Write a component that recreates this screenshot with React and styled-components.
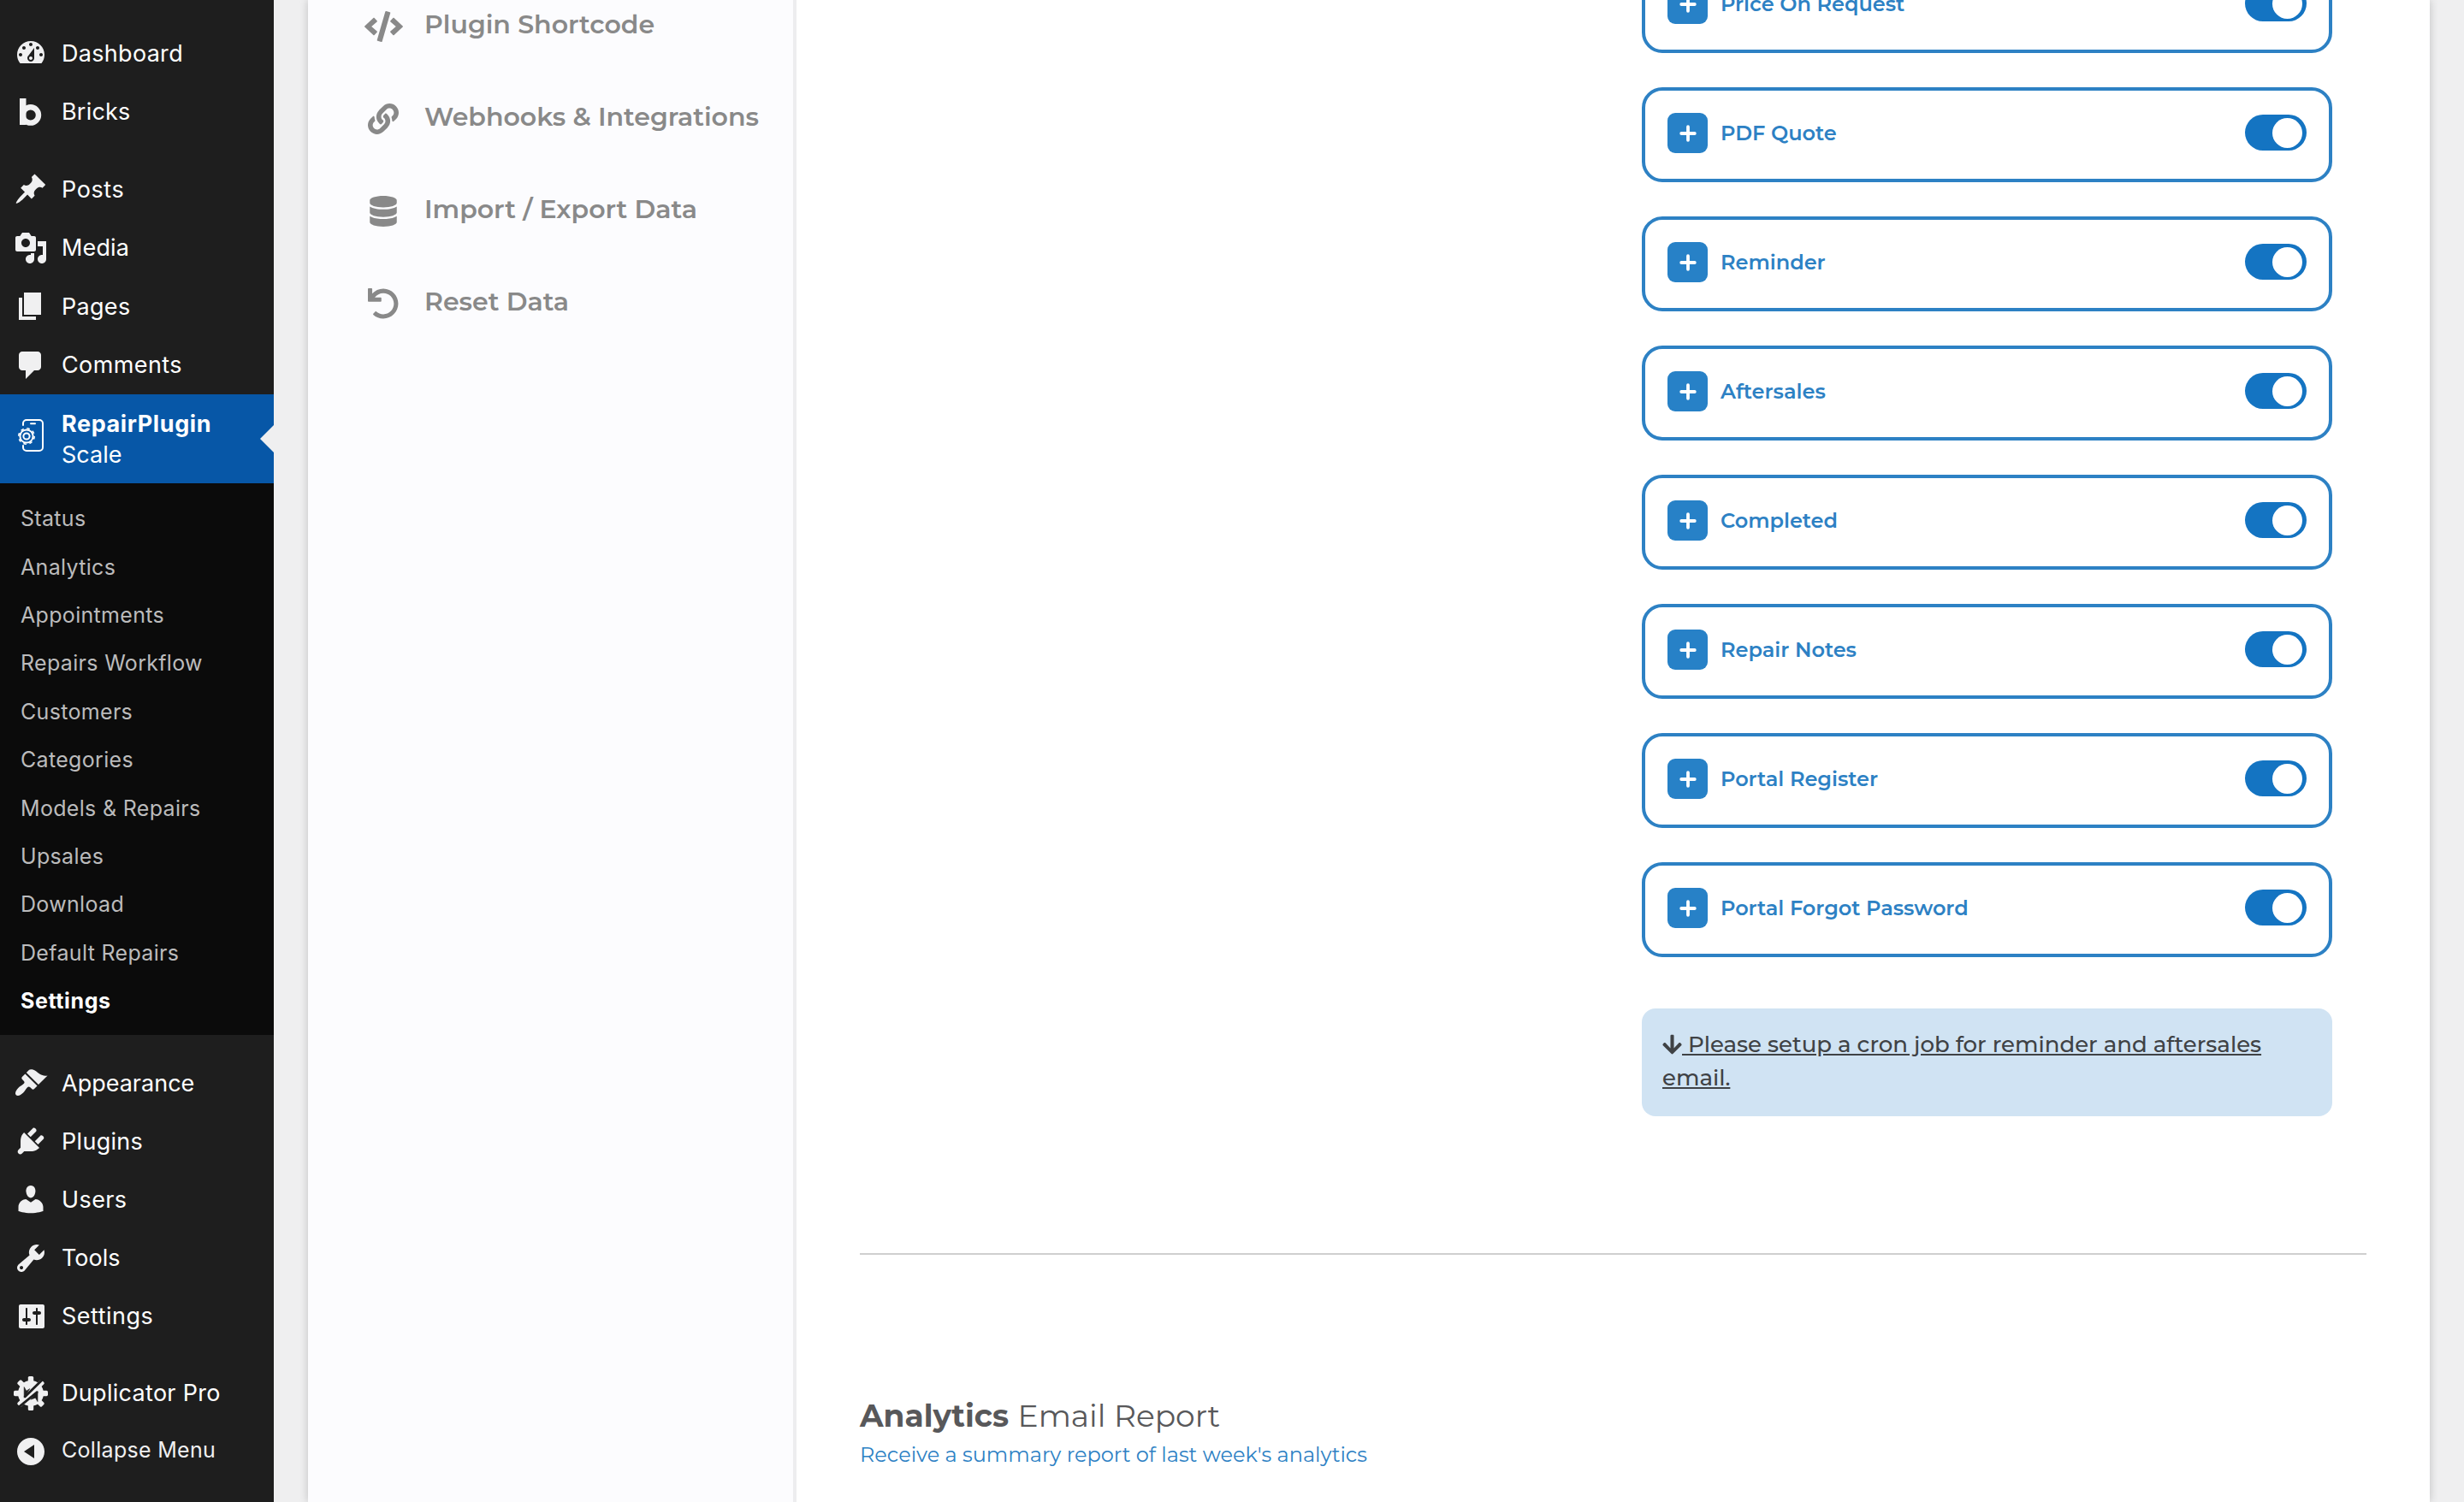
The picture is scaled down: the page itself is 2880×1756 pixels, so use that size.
import React from "react";
import styled, { createGlobalStyle } from "styled-components";
import { FaArrowDown, FaCode, FaDatabase, FaLink, FaUndo } from "react-icons/fa";

const mainMenu = [
  { label: "Dashboard", icon: "dashboard" },
  { label: "Bricks", icon: "bricks", track: 0.2 },
];

const contentMenu = [
  { label: "Posts", icon: "post", track: 0.6 },
  { label: "Media", icon: "media", track: 0.15 },
  { label: "Pages", icon: "page" },
  { label: "Comments", icon: "comments", track: 0.4 },
];

const subMenu = [
  "Status",
  "Analytics",
  "Appointments",
  "Repairs Workflow",
  "Customers",
  "Categories",
  "Models & Repairs",
  "Upsales",
  "Download",
  "Default Repairs",
  "Settings",
];

const adminMenu = [
  { label: "Appearance", icon: "appearance", track: 0 },
  { label: "Plugins", icon: "plugins" },
  { label: "Users", icon: "users", track: 0.4 },
  { label: "Tools", icon: "tools", track: 0.02 },
  { label: "Settings", icon: "settings", track: 0.5 },
];

const settingsNav = [
  { label: "Plugin Shortcode", Icon: FaCode, iconWidth: 45 },
  { label: "Webhooks & Integrations", Icon: FaLink },
  { label: "Import / Export Data", Icon: FaDatabase },
  { label: "Reset Data", Icon: FaUndo },
];

const emails = [
  "Price On Request",
  "PDF Quote",
  "Reminder",
  "Aftersales",
  "Completed",
  "Repair Notes",
  "Portal Register",
  "Portal Forgot Password",
];

const iconPaths = {
  dashboard:
    "M3.76 16h12.48c1.1-1.37 1.76-3.11 1.76-5 0-4.42-3.58-8-8-8s-8 3.58-8 8c0 1.89.66 3.63 1.76 5zM10 4c.55 0 1 .45 1 1s-.45 1-1 1-1-.45-1-1 .45-1 1-1zM6 6c.55 0 1 .45 1 1s-.45 1-1 1-1-.45-1-1 .45-1 1-1zm8 0c.55 0 1 .45 1 1s-.45 1-1 1-1-.45-1-1 .45-1 1-1zm-5.37 5.55L12 7v6c0 1.1-.9 2-2 2s-2-.9-2-2c0-.57.24-1.08.63-1.45zM4 10c.55 0 1 .45 1 1s-.45 1-1 1-1-.45-1-1 .45-1 1-1zm12 0c.55 0 1 .45 1 1s-.45 1-1 1-1-.45-1-1 .45-1 1-1zm-6 2c-.55 0-1 .45-1 1s.45 1 1 1 1-.45 1-1-.45-1-1-1z",
  post: "M10.44 3.02l1.82-1.82 6.36 6.35-1.83 1.82c-1.05-.68-2.48-.57-3.41.36l-.75.75c-.92.93-1.04 2.35-.35 3.41l-1.83 1.82-2.41-2.41-2.8 2.79c-.42.42-3.38 2.71-3.8 2.29s1.86-3.39 2.28-3.81l2.79-2.79L4.1 9.36l1.83-1.82c1.05.69 2.48.57 3.4-.36l.75-.75c.93-.92 1.05-2.35.36-3.41z",
  media:
    "M13 11V4c0-.55-.45-1-1-1h-1.67L9 1H5L3.67 3H2c-.55 0-1 .45-1 1v7c0 .55.45 1 1 1h10c.55 0 1-.45 1-1zM7 4.5c1.38 0 2.5 1.12 2.5 2.5S8.38 9.5 7 9.5 4.5 8.38 4.5 7 5.62 4.5 7 4.5zM14 6h5v10.5c0 1.38-1.12 2.5-2.5 2.5S14 17.88 14 16.5s1.12-2.5 2.5-2.5c.17 0 .34.02.5.05V9h-3V6zm-4 8.05V13h2v3.5c0 1.38-1.12 2.5-2.5 2.5S7 17.88 7 16.5 8.12 14 9.5 14c.17 0 .34.02.5.05z",
  page: "M6 15V2h10v13H6zm-1 1h8v2H3V5h2v11z",
  comments: "M5 2h9c1.1 0 2 .9 2 2v7c0 1.1-.9 2-2 2h-2l-5 5v-5H5c-1.1 0-2-.9-2-2V4c0-1.1.9-2 2-2z",
  appearance:
    "M14.48 11.06L7.41 3.99l1.5-1.5c.5-.56 2.3-.47 3.51.32 1.21.8 1.43 1.28 2.91 2.1 1.18.64 2.45 1.26 4.45.85zm-.71.71L6.7 4.7 4.93 6.47c-.39.39-.39 1.02 0 1.41l1.06 1.06c.39.39.39 1.03 0 1.42-.6.6-1.43 1.11-2.21 1.69-.35.26-.7.53-1.01.84C1.43 14.23.4 16.08 1.4 17.07c.99 1 2.84-.03 4.18-1.36.31-.31.58-.66.85-1.02.57-.78 1.08-1.61 1.69-2.21.39-.39 1.02-.39 1.41 0l1.06 1.06c.39.39 1.02.39 1.41 0z",
  plugins:
    "M13.11 4.36L9.87 7.6 8 5.73l3.24-3.24c.35-.34 1.05-.2 1.56.32.52.51.66 1.21.31 1.55zm-8 1.77l.91-1.12 9.01 9.01-1.19.84c-.71.71-2.63 1.16-3.82 1.16H6.14L4.9 17.26c-.59.59-1.54.59-2.12 0-.59-.58-.59-1.53 0-2.12l1.24-1.24v-3.88c0-1.13.4-3.19 1.09-3.89zm7.26 3.97l3.24-3.24c.34-.35 1.04-.21 1.55.31.52.51.66 1.21.31 1.55l-3.24 3.25z",
  users:
    "M10 9.25c-2.27 0-2.73-3.44-2.73-3.44C7 4.02 7.82 2 9.97 2c2.16 0 2.98 2.02 2.71 3.81 0 0-.41 3.44-2.68 3.44zm0 2.57L12.72 10c2.39 0 4.52 2.33 4.52 4.53v2.49s-3.65 1.13-7.24 1.13c-3.65 0-7.24-1.13-7.24-1.13v-2.49c0-2.25 1.94-4.48 4.47-4.48z",
  tools:
    "M16.68 9.77c-1.34 1.34-3.3 1.67-4.95.99l-5.41 6.52c-.99.99-2.59.99-3.58 0s-.99-2.59 0-3.57l6.52-5.42c-.68-1.65-.35-3.61.99-4.95 1.28-1.28 3.12-1.62 4.72-1.06l-2.89 2.89 2.82 2.82 2.86-2.87c.53 1.58.18 3.39-1.08 4.65zM3.81 16.21c.4.39 1.04.39 1.43 0 .4-.4.4-1.04 0-1.43-.39-.4-1.03-.4-1.43 0-.39.39-.39 1.03 0 1.43z",
  settings:
    "M18 16V4c0-.55-.45-1-1-1H4c-.55 0-1 .45-1 1v12c0 .55.45 1 1 1h13c.55 0 1-.45 1-1zM8 11h1c.55 0 1 .45 1 1s-.45 1-1 1H8v1.5c0 .28-.22.5-.5.5s-.5-.22-.5-.5V13H6c-.55 0-1-.45-1-1s.45-1 1-1h1V5.5c0-.28.22-.5.5-.5s.5.22.5.5V11zm5-2h-1c-.55 0-1-.45-1-1s.45-1 1-1h1V5.5c0-.28.22-.5.5-.5s.5.22.5.5V7h1c.55 0 1 .45 1 1s-.45 1-1 1h-1v5.5c0 .28-.22.5-.5.5s-.5-.22-.5-.5V9z",
  collapse: "M10 2c4.42 0 8 3.58 8 8s-3.58 8-8 8-8-3.58-8-8 3.58-8 8-8zm2 12V6l-6 4z",
};

const MenuIcon = ({ name }) => {
  if (name === "bricks") {
    return (
      <IconSvg viewBox="0 0 40 40">
        <rect x="7" y="4" width="7.5" height="31" />
        <circle cx="19.8" cy="23.4" r="9.2" fill="none" stroke="currentColor" strokeWidth="6.4" />
      </IconSvg>
    );
  }
  if (name === "duplicator") {
    return (
      <IconSvg viewBox="0 0 40 40">
        <circle cx="20" cy="20" r="15" />
        {[0, 45, 90, 135, 180, 225, 270, 315].map((deg) => (
          <rect key={deg} x="16.8" y="0" width="6.4" height="9" rx="1.6" transform={`rotate(${deg} 20 20)`} />
        ))}
        <g fill="#1e1e1e" stroke="#1e1e1e">
          <path d="M12.2 12.6l2.6 4.6 4-2.6-6.6 10.6z" strokeWidth="0.6" />
          <path d="M28 17.6v12l-2.6-4.4-5.6 2z" strokeWidth="0.6" />
          <path d="M12.6 24.4L34 3.4" strokeWidth="2.8" />
          <path d="M5.6 36.4L28 18" strokeWidth="2.8" />
        </g>
      </IconSvg>
    );
  }
  return (
    <IconSvg viewBox="0 0 20 20">
      <path fillRule="evenodd" d={iconPaths[name]} />
    </IconSvg>
  );
};

const PhoneGear = () => (
  <PhoneSvg viewBox="0 0 40 44" fill="none" stroke="#fff" strokeLinecap="round">
    <path d="M11 9V7a4 4 0 0 1 4-4h15a4 4 0 0 1 4 4v28a4 4 0 0 1-4 4H15a4 4 0 0 1-4-4v-2" strokeWidth="2" />
    <path d="M20 7.2h5" strokeWidth="2" />
    <circle cx="15" cy="22" r="7.6" strokeWidth="2" />
    <circle cx="15" cy="22" r="9.2" strokeWidth="1.6" strokeDasharray="3.6 3.63" strokeLinecap="butt" />
    <circle cx="15" cy="22" r="3.6" strokeWidth="2" />
  </PhoneSvg>
);

const PlusIcon = () => (
  <svg width="20" height="20" viewBox="0 0 20 20" stroke="#fff" strokeWidth="3.8" strokeLinecap="round">
    <path d="M10 2.2v15.6M2.2 10h15.6" />
  </svg>
);

const MenuRow = ({ label, icon, track, height }) => (
  <MenuItem $height={height}>
    <MenuIcon name={icon} />
    <MenuLabel $track={track}>{label}</MenuLabel>
  </MenuItem>
);

export default function App() {
  return (
    <Page>
      <GlobalStyle />
      <Sidebar>
        <MenuGroup>
          {mainMenu.map((v) => (
            <MenuRow key={v.label} {...v} height={68.6} />
          ))}
        </MenuGroup>
        <MenuGroup>
          {contentMenu.map((v) => (
            <MenuRow key={v.label} {...v} height={68.5} />
          ))}
        </MenuGroup>
        <ActiveItem>
          <PhoneGear />
          <ActiveLabel>
            <b>RepairPlugin</b>
            <span>Scale</span>
          </ActiveLabel>
          <Notch />
        </ActiveItem>
        <SubMenu>
          {subMenu.map((v) => (
            <SubItem key={v} $current={v === "Settings"}>
              {v}
            </SubItem>
          ))}
        </SubMenu>
        <MenuGroup>
          {adminMenu.map((v) => (
            <MenuRow key={v.label} {...v} height={68.1} />
          ))}
        </MenuGroup>
        <MenuGroup>
          <MenuRow label="Duplicator Pro" icon="duplicator" height={68.6} />
          <CollapseItem>
            <MenuIcon name="collapse" />
            <CollapseLabel>Collapse Menu</CollapseLabel>
          </CollapseItem>
        </MenuGroup>
      </Sidebar>
      <Panel>
        <SettingsNav>
          {settingsNav.map(({ label, Icon, iconWidth }) => (
            <NavItem key={label}>
              <NavIcon $width={iconWidth}>
                <Icon />
              </NavIcon>
              {label}
            </NavItem>
          ))}
        </SettingsNav>
        <Content>
          <Emails>
            {emails.map((v) => (
              <EmailCard key={v}>
                <PlusButton>
                  <PlusIcon />
                </PlusButton>
                <EmailName>{v}</EmailName>
                <Toggle>
                  <Knob />
                </Toggle>
              </EmailCard>
            ))}
            <Notice>
              <FaArrowDown />
              <u>&nbsp;Please setup a cron job for reminder and aftersales email.</u>
            </Notice>
          </Emails>
          <Divider />
          <Heading>
            <b>Analytics</b> Email Report
          </Heading>
          <SubHeading>Receive a summary report of last week's analytics</SubHeading>
        </Content>
      </Panel>
    </Page>
  );
}

const GlobalStyle = createGlobalStyle`
  * {
    box-sizing: border-box;
  }
  body {
    margin: 0;
    background: #efeff0;
    font-family: Inter, "Liberation Sans", sans-serif;
  }
`;

const Page = styled.div`
  display: flex;
  height: 1756px;
  overflow: hidden;
`;

const Sidebar = styled.aside`
  flex: none;
  width: 320px;
  height: 100%;
  padding-top: 28px;
  background: #1e1e1e;
  color: #fff;
`;

const MenuGroup = styled.div`
  & + & {
    margin-top: 22px;
  }
`;

const MenuItem = styled.div`
  display: flex;
  align-items: center;
  gap: 16px;
  height: ${({ $height }) => $height + "px"};
  padding-left: 16px;
`;

const MenuLabel = styled.span`
  font-size: 27px;
  letter-spacing: ${({ $track = 0.3 }) => $track + "px"};
`;

const CollapseItem = styled(MenuItem)`
  height: 67px;
`;

const CollapseLabel = styled.span`
  margin-top: -4px;
  color: #f0f0f1;
  font-size: 25px;
  letter-spacing: 0.3px;
`;

const IconSvg = styled.svg`
  flex: none;
  width: 40px;
  height: 40px;
  color: #f0f0f1;
  fill: currentColor;
`;

const PhoneSvg = styled.svg`
  flex: none;
  width: 40px;
  height: 44px;
  margin-top: 10px;
`;

const ActiveItem = styled.div`
  position: relative;
  display: flex;
  align-items: flex-start;
  gap: 16px;
  height: 104px;
  padding: 17px 16px 15px;
  background: #0757a7;
`;

const ActiveLabel = styled.div`
  display: flex;
  flex-direction: column;
  font-size: 27px;
  line-height: 36px;
  b {
    letter-spacing: 0.6px;
  }
`;

const Notch = styled.div`
  position: absolute;
  top: 36px;
  right: 0;
  border: 16px solid transparent;
  border-left-width: 0;
  border-right-color: #efeff0;
`;

const SubMenu = styled.div`
  height: 645px;
  margin-bottom: 22px;
  padding: 13px 24px;
  background: #0b0b0b;
`;

const SubItem = styled.div`
  color: ${({ $current }) => ($current ? "#fff" : "#bbbbbc")};
  font-size: 25px;
  font-weight: ${({ $current }) => ($current ? 700 : 400)};
  line-height: 56.4px;
  letter-spacing: ${({ $current }) => ($current ? "0.6px" : "0.32px")};
`;

const Panel = styled.div`
  display: flex;
  width: 2480px;
  height: 100%;
  margin-left: 40px;
  background: #fff;
  box-shadow: 0 0 10px rgba(0, 0, 0, 0.2);
  font-family: Montserrat, Inter, sans-serif;
`;

const SettingsNav = styled.nav`
  flex: none;
  width: 571px;
  overflow: hidden;
  background: #fcfcfe;
  border-right: 4px solid #ededef;
`;

const NavItem = styled.div`
  display: flex;
  align-items: center;
  gap: 25px;
  height: 108px;
  padding-left: 65px;
  color: #898989;
  font-size: 30px;
  font-weight: 600;
  &:first-child {
    margin-top: -26px;
  }
`;

const NavIcon = styled.div`
  display: flex;
  justify-content: center;
  width: 46px;
  padding-top: 5px;
  svg {
    width: ${({ $width = 36 }) => $width + "px"};
    height: 36px;
  }
`;

const Content = styled.main`
  flex: 1;
  padding: 0 74px;
`;

const Emails = styled.div`
  display: flex;
  flex-direction: column;
  gap: 40px;
  width: 807px;
  margin: -49px 40px 0 auto;
`;

const EmailCard = styled.div`
  display: flex;
  align-items: flex-start;
  height: 111px;
  padding: 26px;
  border: 4px solid #2d81c4;
  border-radius: 24px;
`;

const PlusButton = styled.div`
  display: flex;
  align-items: center;
  justify-content: center;
  width: 47px;
  height: 47px;
  border-radius: 9px;
  background: #2781c7;
`;

const EmailName = styled.div`
  flex: 1;
  margin-left: 15px;
  color: #2d81c4;
  font-size: 24px;
  font-weight: 600;
  line-height: 48px;
`;

const Toggle = styled.div`
  display: flex;
  align-items: center;
  justify-content: flex-end;
  width: 72px;
  height: 42px;
  margin-top: 2px;
  padding-right: 5px;
  border-radius: 21px;
  background: #1474c2;
`;

const Knob = styled.div`
  width: 35px;
  height: 35px;
  border-radius: 50%;
  background: #fff;
`;

const Notice = styled.div`
  height: 126px;
  margin-top: 20px;
  padding: 23px 24px;
  border-radius: 16px;
  background: #d0e3f3;
  color: #3f4245;
  font-size: 26px;
  font-weight: 500;
  line-height: 39px;
  svg {
    width: 23px;
    height: 26px;
    vertical-align: -4px;
  }
`;

const Divider = styled.div`
  height: 2px;
  margin-top: 160px;
  background: #cfcfcf;
`;

const Heading = styled.div`
  margin-top: 164px;
  color: #58585a;
  font-size: 36px;
  line-height: 48px;
  b {
    margin-right: 1px;
  }
`;

const SubHeading = styled.div`
  margin-top: 2px;
  color: #2d81c4;
  font-size: 24px;
  line-height: 40px;
`;
